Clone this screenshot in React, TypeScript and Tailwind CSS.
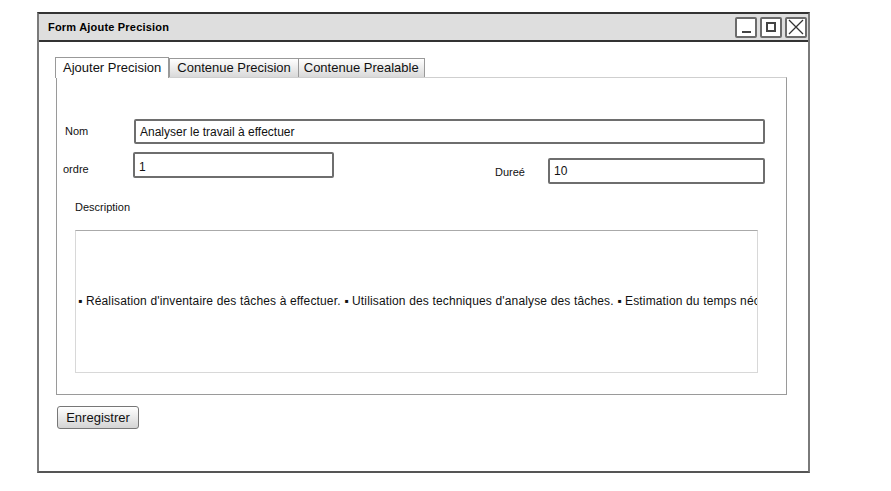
import React from 'react'

const hand = { fontFamily: '"Liberation Sans", Arial, sans-serif' }

function WinButton({ children }: { children: React.ReactNode }) {
  return (
    <div className="w-[22px] h-[21px] border-2 border-[#6b6b6b] rounded-[2px] bg-white flex items-center justify-center">
      {children}
    </div>
  )
}

function Field({ value, className }: { value: string; className: string }) {
  return (
    <div className={`border-2 border-[#6e6e6e] rounded-[2px] bg-white flex items-center px-[4px] text-[12px] text-[#111] ${className}`}>
      {value}
    </div>
  )
}

export default function App() {
  return (
    <div className="w-[891px] h-[491px] bg-white" style={hand}>
      <div className="pt-[12px] pl-[37px]">
        <div className="w-[773px] h-[461px] border-2 border-t-[#333] border-[#7a7a7a] border-b-[#555] flex flex-col">
          {/* title bar */}
          <div className="h-[28px] bg-[#dedede] border-b-2 border-[#333] flex items-center justify-between pl-[9px] pr-[1px]">
            <span className="text-[11px] font-bold text-black tracking-[0.2px]">Form Ajoute Precision</span>
            <div className="flex gap-[3px]">
              <WinButton>
                <div className="w-[9px] h-[2px] bg-[#444] mt-[9px]" />
              </WinButton>
              <WinButton>
                <div className="w-[10px] h-[10px] border-2 border-[#444]" />
              </WinButton>
              <WinButton>
                <svg width="16" height="16" viewBox="0 0 16 16">
                  <path d="M1 1 L15 15 M15 1 L1 15" stroke="#333" strokeWidth="1.3" />
                </svg>
              </WinButton>
            </div>
          </div>

          <div className="pl-[16px] pt-[15px]">
            {/* tabs */}
            <div className="flex items-end h-[20px] text-[13px] text-[#111]">
              <div className="h-[21px] px-[7px] border border-b-0 border-[#999] bg-white flex items-center relative z-10 -mb-px">
                Ajouter Precision
              </div>
              <div className="h-[19px] px-[7px] border border-b-0 border-[#999] bg-gradient-to-b from-white to-[#d9d9d9] flex items-center">
                Contenue Precision
              </div>
              <div className="h-[19px] px-[5px] border border-b-0 border-l-0 border-[#999] bg-gradient-to-b from-white to-[#d9d9d9] flex items-center">
                Contenue Prealable
              </div>
            </div>

            {/* panel */}
            <div className="ml-[1px] w-[731px] h-[318px] border border-[#9a9a9a] border-t-[#cfcfcf] flex flex-col">
              <div className="flex items-center mt-[41px] text-[11px] text-[#111]">
                <span className="ml-[8px] w-[69px]">Nom</span>
                <Field value="Analyser le travail à effectuer" className="w-[631px] h-[25px]" />
              </div>

              <div className="flex items-start mt-[8px] text-[11px] text-[#111]">
                <span className="ml-[6px] w-[70px] mt-[9px]">ordre</span>
                <Field value="1" className="w-[201px] h-[26px] items-start pt-[4px]" />
                <span className="ml-[161px] w-[53px] mt-[12px]">Dureé</span>
                <Field value="10" className="w-[217px] h-[26px] mt-[6px]" />
              </div>

              <div className="ml-[18px] mt-[15px] text-[11px] text-[#111]">Description</div>

              <div className="ml-[18px] mt-[14px] w-[683px] h-[143px] border border-[#d8d8d8] border-t-[#aaa] flex items-center overflow-hidden">
                <div className="whitespace-nowrap text-[12px] tracking-[0.15px] text-[#111] pl-[2px]">
                  ▪ Réalisation d'inventaire des tâches à effectuer. ▪ Utilisation des techniques d'analyse des tâches. ▪ Estimation du temps nécessaire.
                </div>
              </div>
            </div>

            {/* save button */}
            <div className="mt-[11px] ml-[2px] w-[82px] h-[23px] border border-[#777] rounded-[3px] bg-gradient-to-b from-white to-[#d4d4d4] flex items-center justify-center text-[13px] text-[#111]">
              Enregistrer
            </div>
          </div>
        </div>
      </div>
    </div>
  )
}
